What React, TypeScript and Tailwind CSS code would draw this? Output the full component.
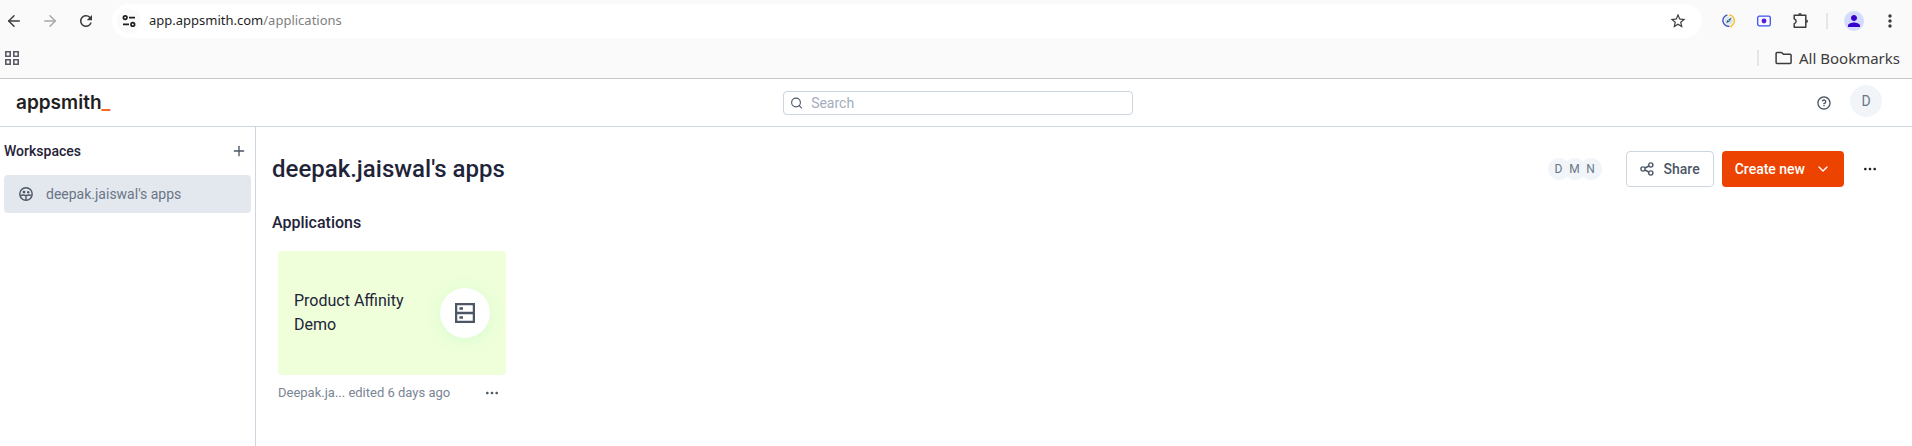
import React from "react";
import { ArrowLeft, ArrowRight, Plus, ChevronDown, Search } from "lucide-react";
import { MdRefresh, MdStarBorder, MdMoreVert, MdPerson } from "react-icons/md";
import { RiMoreFill, RiQuestionLine } from "react-icons/ri";

const TuneIcon = () => (
  <svg width="14" height="14" viewBox="0 0 14 14" fill="none" stroke="#1f1f1f" strokeWidth="1.7">
    <circle cx="3.2" cy="3.6" r="1.8" />
    <path d="M7 3.6h6M1 10.4h6" />
    <circle cx="10.8" cy="10.4" r="1.8" />
  </svg>
);

const GridIcon = () => (
  <svg width="14" height="14" viewBox="0 0 14 14" fill="none" stroke="#5a5a66" strokeWidth="1.6">
    <path d="M.8.8h4.4v4.4H.8zM8.8.8h4.4v4.4H8.8zM.8 8.8h4.4v4.4H.8zM8.8 8.8h4.4v4.4H8.8z" />
  </svg>
);

const RadarIcon = () => (
  <svg width="14" height="14" viewBox="0 0 14 14" fill="none" strokeWidth="1.5">
    <circle cx="6.8" cy="6.6" r="4" fill="#d5e8f0" />
    <path d="M5.4 1A5.7 5.7 0 0 0 7.5 12.2" stroke="#4a5fc1" />
    <path d="M7.2 1A5.7 5.7 0 0 1 9.8 11.4L8.6 13.4" stroke="#fbc02d" />
    <path d="M4.2 9l1.4-2.8 3.8-2.4-1.6 3.4z" fill="#2b3350" />
    <circle cx="6.8" cy="6.4" r=".8" fill="#7fd0e8" />
  </svg>
);

const RecorderIcon = () => (
  <svg width="14" height="12" viewBox="0 0 14 12" fill="none">
    <rect x=".7" y="1.2" width="12.6" height="9.6" rx="1.6" stroke="#3d50f5" strokeWidth="1.3" />
    <circle cx="7" cy="6" r="2.4" fill="#5a1be0" />
  </svg>
);

const PuzzleIcon = () => (
  <svg width="18" height="18" viewBox="0 0 18 18" fill="none" stroke="#3c3c3c" strokeWidth="1.5" strokeLinejoin="round">
    <path d="M2.2 3.2h11.6v12H2.2v-3.4a2.6 2.6 0 0 0 0-5z" />
    <path d="M6.2 2.8a1.8 1.8 0 0 1 3.6 0zM14.2 7.4a1.8 1.8 0 0 1 0 3.6z" fill="#3c3c3c" stroke="none" />
  </svg>
);

const FolderIcon = () => (
  <svg width="18" height="14" viewBox="0 0 18 14" fill="none" stroke="#3c3c3c" strokeWidth="1.5" strokeLinejoin="round">
    <path d="M2 1.5h4.6l1.8 1.8h6.8q.9 0 .9.9v7.3q0 .9-.9.9H2q-.9 0-.9-.9V2.4q0-.9.9-.9z" />
  </svg>
);

const WorkspaceIcon = () => (
  <svg width="14" height="14" viewBox="0 0 14 14" fill="none" stroke="#4c5664" strokeWidth="1.4">
    <circle cx="7" cy="7" r="6.2" />
    <circle cx="5" cy="5.1" r="1.4" fill="#4c5664" stroke="none" />
    <circle cx="9.2" cy="5.3" r="1.2" fill="#4c5664" stroke="none" />
    <path d="M1.4 8.6q2.8-1.2 5.6 0q2.8-1.2 5.6-.2M7 8.4v4.8" />
  </svg>
);

const ShareIcon = () => (
  <svg width="14" height="14" viewBox="0 0 14 14" fill="none" stroke="#4c5664" strokeWidth="1.4">
    <circle cx="3" cy="7" r="2.1" />
    <circle cx="10.8" cy="3" r="2.1" />
    <circle cx="10.8" cy="11" r="2.1" />
    <path d="M4.9 6l4-2M4.9 8l4 2" />
  </svg>
);

const ServerIcon = () => (
  <svg width="20" height="20" viewBox="0 0 20 20" fill="none" stroke="#4c5664" strokeWidth="2.3">
    <path d="M1.1 1.1h17.8v17.8H1.1zM1 10h18" />
    <path d="M4.4 5.5h3.6M4.4 14.5h3.6" />
  </svg>
);

const members = ["D", "M", "N"];

function BrowserBar() {
  return (
    <div className="border-b border-[#c8c8c8] bg-[#fafafa] font-['Noto_Sans',sans-serif] text-[#3c3c3c]">
      <div className="flex h-[42px] items-center pr-3">
        <div className="flex w-28 items-center gap-[18px] pl-[5px]">
          <button aria-label="Back"><ArrowLeft size={18} /></button>
          <button aria-label="Forward" className="text-[#a8a8a8]"><ArrowRight size={18} /></button>
          <button aria-label="Reload"><MdRefresh size={18} /></button>
        </div>
        <div className="flex h-[34px] flex-1 items-center rounded-full bg-white pr-[15px] pl-[5px]">
          <button aria-label="Site information" className="flex size-6 items-center justify-center rounded-full bg-[#fafafa]">
            <TuneIcon />
          </button>
          <div className="flex-1 pl-2 text-[13px] text-[#808080]">
            <span className="text-[#1f1f1f]">app.appsmith.com</span>/applications
          </div>
          <button aria-label="Bookmark this page"><MdStarBorder size={18} /></button>
        </div>
        <div className="flex items-center gap-[21px] pl-5">
          <button aria-label="Radar extension"><RadarIcon /></button>
          <button aria-label="Recorder extension"><RecorderIcon /></button>
          <button aria-label="Extensions"><PuzzleIcon /></button>
        </div>
        <div className="ml-4 h-4 w-0.5 bg-[#e6e6e6]" />
        <button aria-label="Profile" className="ml-4 flex size-5 items-center justify-center rounded-full bg-[#d3dcff] text-[#3a00d0]">
          <MdPerson size={18} />
        </button>
        <button aria-label="Browser menu" className="ml-4"><MdMoreVert size={20} /></button>
      </div>
      <div className="flex h-9 items-start justify-between pr-3 pl-[5px]">
        <button aria-label="Apps" className="mt-[9px]"><GridIcon /></button>
        <div className="flex h-8 items-center">
          <div className="mr-4 h-4 w-0.5 bg-[#e6e6e6]" />
          <button className="flex items-center gap-1.5 text-[15px]"><FolderIcon />All Bookmarks</button>
        </div>
      </div>
    </div>
  );
}

function AppHeader() {
  return (
    <header className="grid h-12 grid-cols-[1fr_350px_1fr] items-center border-b border-[#cdd5df] pr-3 pl-4">
      <a href="#" className="font-[Inter,sans-serif] text-[19px] leading-5 font-semibold text-[#1f1f1f]">
        appsmith<span className="text-[#f86a2b]">_</span>
      </a>
      <label className="flex h-6 items-center gap-2 rounded border border-[#cdd5df] px-1.5">
        <Search size={14} className="text-[#4c5664]" />
        <input aria-label="Search" placeholder="Search" className="w-full text-sm outline-none placeholder:text-[#a3adbd]" />
      </label>
      <div className="flex items-center justify-end gap-[18px] pr-[18px]">
        <button aria-label="Help" className="text-[#4c5664]"><RiQuestionLine size={16} /></button>
        <button className="mb-1 size-8 rounded-full bg-[#f1f5f9] text-sm text-[#6a7585]">D</button>
      </div>
    </header>
  );
}

export default function App() {
  return (
    <div className="flex min-h-screen flex-col bg-white font-[Roboto,sans-serif] text-[#1f2439]">
      <BrowserBar />
      <AppHeader />
      <div className="flex flex-1">
        <aside className="w-64 border-r border-[#cdd5df] px-1 pt-[14px]">
          <div className="flex items-center justify-between pr-1">
            <h2 className="text-sm leading-5 font-medium">Workspaces</h2>
            <button aria-label="New workspace" className="text-[#4c5664]"><Plus size={16} /></button>
          </div>
          <a href="#" className="mt-[14px] flex h-[38px] items-center gap-[13px] rounded bg-[#e3e8ef] px-[15px] text-sm text-[#6a7585]">
            <WorkspaceIcon />
            deepak.jaiswal's apps
          </a>
        </aside>
        <main className="flex-1 px-4 pt-6">
          <div className="flex items-center justify-between pr-[18px]">
            <h1 className="text-2xl leading-9 font-medium">deepak.jaiswal's apps</h1>
            <div className="flex items-center">
              <div className="flex -space-x-1.5">
                {members.map((m) => (
                  <span key={m} className="flex size-[22px] items-center justify-center rounded-full bg-[#f1f5f9] text-xs text-[#6a7585]">{m}</span>
                ))}
              </div>
              <button className="ml-6 flex h-9 items-center gap-2.5 rounded border border-[#cdd5df] px-[13px] text-sm font-medium text-[#4c5664]">
                <ShareIcon />Share
              </button>
              <button className="ml-2 flex h-9 items-center gap-2.5 rounded bg-[#ec4400] px-[13px] text-sm font-medium text-white">
                Create new<ChevronDown size={16} />
              </button>
              <button aria-label="Workspace options" className="ml-[18px] text-[#1f1f1f]"><RiMoreFill size={16} /></button>
            </div>
          </div>
          <h2 className="mt-6 text-base leading-6 font-medium">Applications</h2>
          <article className="mt-4 ml-1.5 w-[228px]">
            <a href="#" className="flex h-[124px] items-center justify-between rounded bg-[#eeffda] px-4">
              <span className="w-28 text-base leading-6">Product Affinity Demo</span>
              <span className="flex size-[50px] items-center justify-center rounded-full bg-white shadow-[0_2px_16px_#d8fbd0]"><ServerIcon /></span>
            </a>
            <div className="flex items-center justify-between pt-2 pr-1.5">
              <span className="text-[13px] leading-5 text-[#7a8494]">Deepak.ja... edited 6 days ago</span>
              <button aria-label="App options" className="text-[#4c5664]"><RiMoreFill size={16} /></button>
            </div>
          </article>
        </main>
      </div>
    </div>
  );
}
